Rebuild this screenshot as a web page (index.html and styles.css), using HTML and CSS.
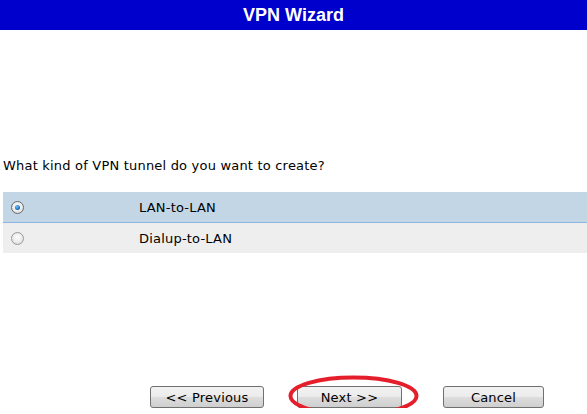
FILE: index.html
```html
<!DOCTYPE html>
<html lang="en">
<head>
    <meta charset="UTF-8">
    <title>VPN Wizard</title>
    <link rel="stylesheet" href="styles.css">
</head>
<body>
    <header class="title-bar">VPN Wizard</header>
    <main class="wizard">
        <p class="question">What kind of VPN tunnel do you want to create?</p>
        <div class="options">
            <div class="option option-selected">
                <span class="radio radio-on"></span>
                <span class="option-label">LAN-to-LAN</span>
            </div>
            <div class="option">
                <span class="radio"></span>
                <span class="option-label">Dialup-to-LAN</span>
            </div>
        </div>
        <div class="actions">
            <button class="btn btn-prev">&lt;&lt; Previous</button>
            <span class="highlight">
                <button class="btn btn-next">Next &gt;&gt;</button>
                <svg class="ring" width="133" height="42" viewBox="0 0 133 42">
                    <ellipse cx="66.5" cy="21" rx="63" ry="18.5" fill="none" stroke="#e41e2a" stroke-width="4"/>
                </svg>
            </span>
            <button class="btn btn-cancel">Cancel</button>
        </div>
    </main>
</body>
</html>
```
FILE: styles.css
```css
body {
    margin: 0;
    background: #fff;
    font-family: "DejaVu Sans", Verdana, sans-serif;
    font-size: 13px;
    letter-spacing: 0.2px;
    color: #000;
}

.title-bar {
    height: 30px;
    line-height: 30px;
    background: #0000cc;
    color: #fff;
    text-align: center;
    font-family: "Liberation Sans", Arial, sans-serif;
    font-weight: bold;
    font-size: 18px;
    letter-spacing: 0;
}

.wizard {
    padding: 0 0 0 3px;
}

.question {
    margin: 128px 0 0 0;
    line-height: 16px;
}

.options {
    margin-top: 18px;
}

.option {
    display: flex;
    align-items: center;
    height: 30px;
    background: #eeeeee;
}

.option-selected {
    background: #c2d6e6;
    border-bottom: 1px solid #8cb6e0;
}

.radio {
    width: 11px;
    height: 11px;
    margin-left: 8px;
    border-radius: 50%;
    border: 1px solid #9a9a9a;
    background: radial-gradient(circle at 50% 40%, #ffffff 0%, #e8e8e8 60%, #c8c8c8 100%);
    box-sizing: content-box;
    position: relative;
}

.radio-on {
    border-color: #6a6a6a;
}

.radio-on::after {
    content: "";
    position: absolute;
    left: 3px;
    top: 3px;
    width: 5px;
    height: 5px;
    border-radius: 50%;
    background: radial-gradient(circle at 40% 35%, #6fc2ff 0%, #1a6fc4 60%, #0b3f7a 100%);
}

.option-label {
    margin-left: 115px;
}

.actions {
    display: flex;
    align-items: center;
    margin-top: 133px;
    padding-left: 147px;
}

.btn {
    height: 22px;
    padding: 0;
    border: 1px solid #707070;
    border-radius: 3px;
    background: linear-gradient(#f2f2f2 0%, #ebebeb 50%, #dddddd 51%, #cfcfcf 100%);
    font-family: "DejaVu Sans", Verdana, sans-serif;
    font-size: 13px;
    letter-spacing: 0.2px;
    color: #000;
}

.btn-prev {
    width: 114px;
}

.highlight {
    position: relative;
    margin-left: 33px;
    display: flex;
}

.btn-next {
    width: 105px;
}

.ring {
    position: absolute;
    left: -10px;
    top: -11px;
    pointer-events: none;
}

.btn-cancel {
    width: 101px;
    margin-left: 41px;
}
```
